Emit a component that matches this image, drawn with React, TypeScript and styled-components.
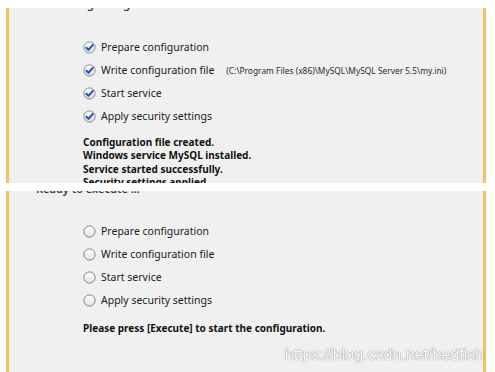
import React, { FC } from "react";
import styled, { createGlobalStyle } from "styled-components";

const GlobalStyle = createGlobalStyle`
  html, body {
    margin: 0;
    padding: 0;
    background: #ffffff;
  }
  body {
    font-family: "Noto Sans", "Open Sans", Arial, sans-serif;
    color: #1b1b1b;
  }
`;

const steps = [
  "Prepare configuration",
  "Write configuration file",
  "Start service",
  "Apply security settings",
];

const Page = styled.div`
  position: relative;
  width: 495px;
  height: 372px;
  overflow: hidden;
  padding: 8px 0 0 6px;
  box-sizing: border-box;
  display: flex;
  flex-direction: column;
  gap: 8px;
`;

const Panel = styled.section<{ $height: number }>`
  width: 480px;
  height: ${(p) => p.$height}px;
  flex-shrink: 0;
  box-sizing: border-box;
  background: #f0f0f0;
  border-left: 3px solid #ecc463;
  border-right: 3px solid #ecc463;
  overflow: hidden;
  padding-left: 27px;
`;

const Heading = styled.div<{ $offset: number }>`
  margin-top: ${(p) => p.$offset}px;
  height: 16px;
  font-size: 11px;
  line-height: 16px;
  font-weight: 600;
  color: #3a3a3a;
`;

const StepList = styled.ul<{ $top: number }>`
  list-style: none;
  margin: ${(p) => p.$top}px 0 0 47px;
  padding: 0;
`;

const Step = styled.li`
  height: 23px;
  display: flex;
  align-items: center;
  gap: 5px;
  font-size: 10.5px;
`;

const PathNote = styled.span`
  margin-left: 7px;
  font-size: 8.4px;
  color: #2b2b2b;
`;

const Status = styled.div<{ $gap: number }>`
  margin: ${(p) => p.$gap}px 0 0 47px;
  font-size: 10px;
  font-weight: 700;
  line-height: 13.5px;
  color: #111;
`;

const Watermark = styled.div`
  position: absolute;
  right: 11px;
  bottom: 8px;
  font-family: "Liberation Sans", Arial, sans-serif;
  font-size: 16px;
  color: rgba(255, 255, 255, 0.97);
  text-shadow: 0 0 1px rgba(100, 100, 100, 0.75), 0 0 1px rgba(100, 100, 100, 0.4);
`;

const CheckIcon: FC = () => (
  <svg width="13" height="13" viewBox="0 0 13 13">
    <defs>
      <linearGradient id="chk" x1="0" y1="0" x2="0" y2="1">
        <stop offset="0" stopColor="#ffffff" />
        <stop offset="1" stopColor="#d9d9d9" />
      </linearGradient>
    </defs>
    <circle cx="6.5" cy="6.5" r="5.6" fill="url(#chk)" stroke="#8c8c8c" strokeWidth="1" />
    <path
      d="M3.4 6.7 L5.5 8.8 L9.8 3.9"
      fill="none"
      stroke="#1f56b5"
      strokeWidth="2"
      strokeLinecap="round"
      strokeLinejoin="round"
    />
  </svg>
);

const RadioIcon: FC = () => (
  <svg width="13" height="13" viewBox="0 0 13 13">
    <defs>
      <linearGradient id="rad" x1="0" y1="0" x2="0" y2="1">
        <stop offset="0" stopColor="#ffffff" />
        <stop offset="1" stopColor="#e2e2e2" />
      </linearGradient>
    </defs>
    <circle cx="6.5" cy="6.5" r="5.6" fill="url(#rad)" stroke="#808080" strokeWidth="1" />
  </svg>
);

const App: FC = () => (
  <>
    <GlobalStyle />
    <Page>
      <Panel $height={175}>
        <Heading $offset={-12}>Processing configuration ...</Heading>
        <StepList $top={23.5}>
          {steps.map((s, i) => (
            <Step key={s}>
              <CheckIcon />
              {s}
              {i === 1 && (
                <PathNote>(C:\Program Files (x86)\MySQL\MySQL Server 5.5\my.ini)</PathNote>
              )}
            </Step>
          ))}
        </StepList>
        <Status $gap={8}>
          Configuration file created.
          <br />
          Windows service MySQL installed.
          <br />
          Service started successfully.
          <br />
          Security settings applied.
        </Status>
      </Panel>
      <Panel $height={200}>
        <Heading $offset={-10}>Ready to execute ...</Heading>
        <StepList $top={22.5}>
          {steps.map((s) => (
            <Step key={s}>
              <RadioIcon />
              {s}
            </Step>
          ))}
        </StepList>
        <Status $gap={10}>Please press [Execute] to start the configuration.</Status>
      </Panel>
      <Watermark>https://blog.csdn.net/bedfish</Watermark>
    </Page>
  </>
);

export default App;
